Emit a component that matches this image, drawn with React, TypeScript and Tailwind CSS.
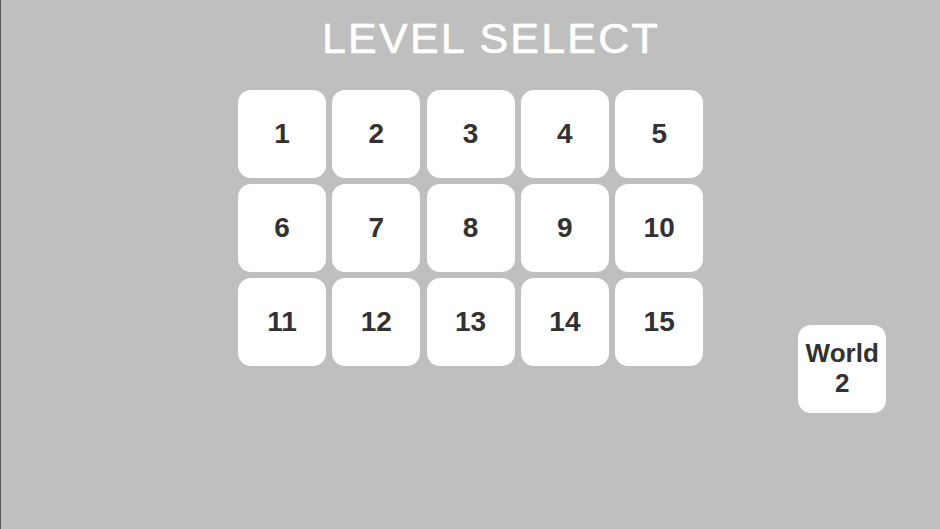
import React from "react";

const levels = Array.from({ length: 15 }, (_, i) => i + 1);

function LevelButton({ label }: { label: string }) {
  return (
    <button className="flex h-[88px] w-[88px] items-center justify-center rounded-[13px] bg-white text-[28px] font-bold leading-none text-[#323232]">
      {label}
    </button>
  );
}

export default function App() {
  return (
    <div
      className="h-[529px] w-[940px] overflow-hidden border-l border-[#555555] bg-[#bfbfbf]"
      style={{ fontFamily: '"Liberation Sans", Arial, sans-serif' }}
    >
      {/* title */}
      <div className="pt-[17px] pl-[321px]">
        <h1 className="text-[43px] font-normal leading-[43px] tracking-[2.2px] text-white [-webkit-text-stroke:0.6px_white]">
          LEVEL SELECT
        </h1>
      </div>

      <div className="mt-[30px] flex items-start pl-[237px]">
        {/* level grid */}
        <div className="grid grid-cols-5 gap-x-[6.3px] gap-y-[6px]">
          {levels.map((n) => (
            <LevelButton key={n} label={String(n)} />
          ))}
        </div>

        {/* next world */}
        <button className="ml-[95px] mt-[235px] flex h-[88px] w-[88px] flex-col items-center justify-center rounded-[13px] bg-white pb-[2px] text-[26px] font-bold leading-[30px] text-[#323232]">
          <span>World</span>
          <span>2</span>
        </button>
      </div>
    </div>
  );
}
